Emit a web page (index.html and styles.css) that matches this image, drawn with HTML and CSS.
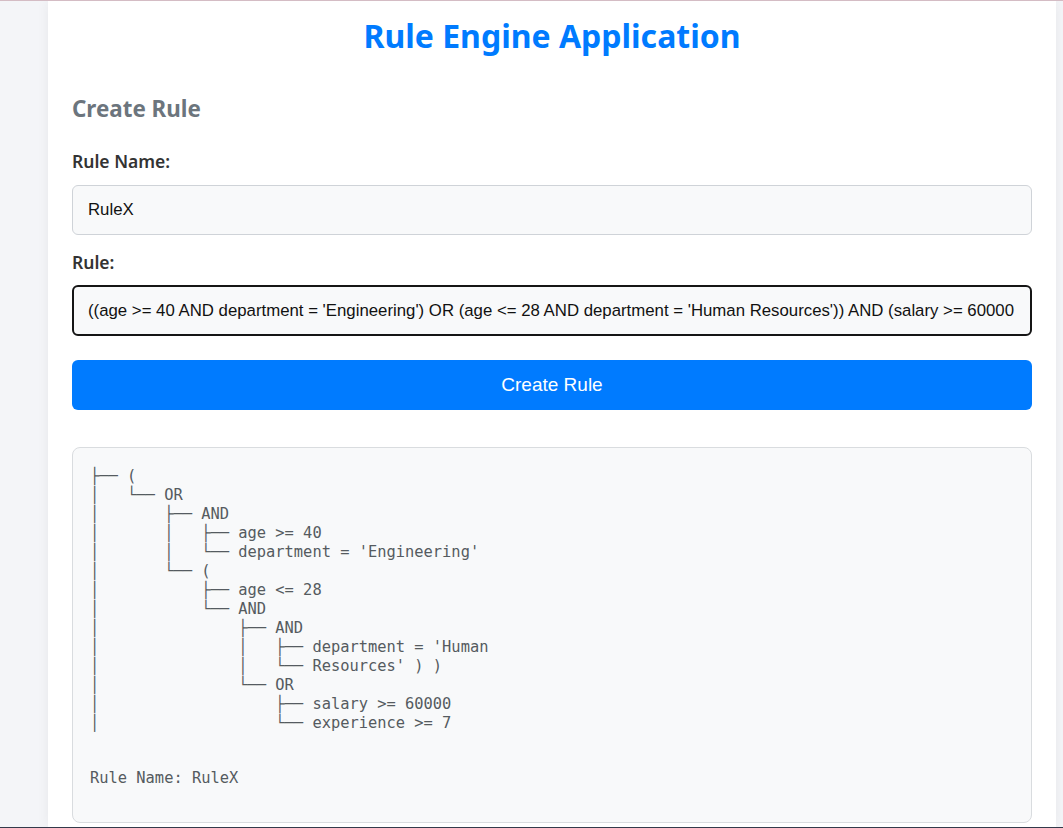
FILE: index.html
```html
<!DOCTYPE html>
<html>
<head>
<meta charset="utf-8">
<link rel="stylesheet" href="styles.css">
</head>
<body>
<div class="page">
  <main class="container">
    <h1 class="title">Rule Engine Application</h1>
    <section class="create">
      <h2 class="section-title">Create Rule</h2>
      <label class="label label-first">Rule Name:</label>
      <input class="field" type="text" value="RuleX">
      <label class="label">Rule:</label>
      <input class="field field-focus" type="text" value="((age >= 40 AND department = 'Engineering') OR (age <= 28 AND department = 'Human Resources')) AND (salary >= 60000 OR experience >= 7)">
      <button class="btn">Create Rule</button>
    </section>
    <div class="result">
<pre class="tree">├── (
│   └── OR
│       ├── AND
│       │   ├── age &gt;= 40
│       │   └── department = 'Engineering'
│       └── (
│           ├── age &lt;= 28
│           └── AND
│               ├── AND
│               │   ├── department = 'Human
│               │   └── Resources' ) )
│               └── OR
│                   ├── salary &gt;= 60000
│                   └── experience &gt;= 7</pre>
<pre class="rule-name">Rule Name: RuleX</pre>
    </div>
  </main>
</div>
</body>
</html>
```

FILE: styles.css
```css
html, body {
  margin: 0;
  padding: 0;
}
body {
  background: #f4f5f8;
  font-family: "Noto Sans", "Open Sans", sans-serif;
  border-top: 1px solid #d4bcc4;
  border-bottom: 1px solid #343a4a;
  height: 826px;
  overflow: hidden;
}
.page {
  display: flex;
  height: 100%;
}
.container {
  margin-left: 48px;
  width: 1008px;
  background: #ffffff;
  box-shadow: 0 0 12px rgba(0, 0, 0, 0.06);
  padding: 0 24px;
  box-sizing: border-box;
}
.title {
  margin: 12px 0 0;
  text-align: center;
  color: #007bff;
  font-size: 32px;
  font-weight: 700;
  line-height: 46px;
}
.create {
  display: flex;
  flex-direction: column;
}
.section-title {
  margin: 35px 0 0;
  color: #6c757d;
  font-size: 22.4px;
  font-weight: 700;
  line-height: 30px;
}
.label {
  margin-top: 15px;
  color: #333333;
  font-size: 17.5px;
  font-weight: 600;
  line-height: 24px;
}
.label-first {
  margin-top: 25px;
}
.field {
  margin-top: 12px;
  height: 50px;
  box-sizing: border-box;
  border: 1px solid #cfd3d8;
  border-radius: 6px;
  background: #f8f9fa;
  padding: 0 15px;
  font-family: "Liberation Sans", Arial, sans-serif;
  font-size: 16.8px;
  color: #111;
  outline: none;
}
.field-focus {
  margin-top: 11px;
  border: 2px solid #151515;
  padding: 0 14px;
  height: 51px;
}
.btn {
  margin-top: 24px;
  height: 50px;
  border: none;
  border-radius: 6px;
  background: #007bff;
  color: #ffffff;
  font-family: "Liberation Sans", Arial, sans-serif;
  font-size: 19px;
}
.result {
  margin-top: 37px;
  background: #f8f9fa;
  border: 1px solid #d9dcdf;
  border-radius: 8px;
  padding: 19px 17px 35px;
  height: 376px;
  box-sizing: border-box;
}
.tree, .rule-name {
  margin: 0;
  font-family: "DejaVu Sans Mono", monospace;
  font-size: 15.4px;
  line-height: 19px;
  color: #555b60;
}
.rule-name {
  margin-top: 36px;
}
```
